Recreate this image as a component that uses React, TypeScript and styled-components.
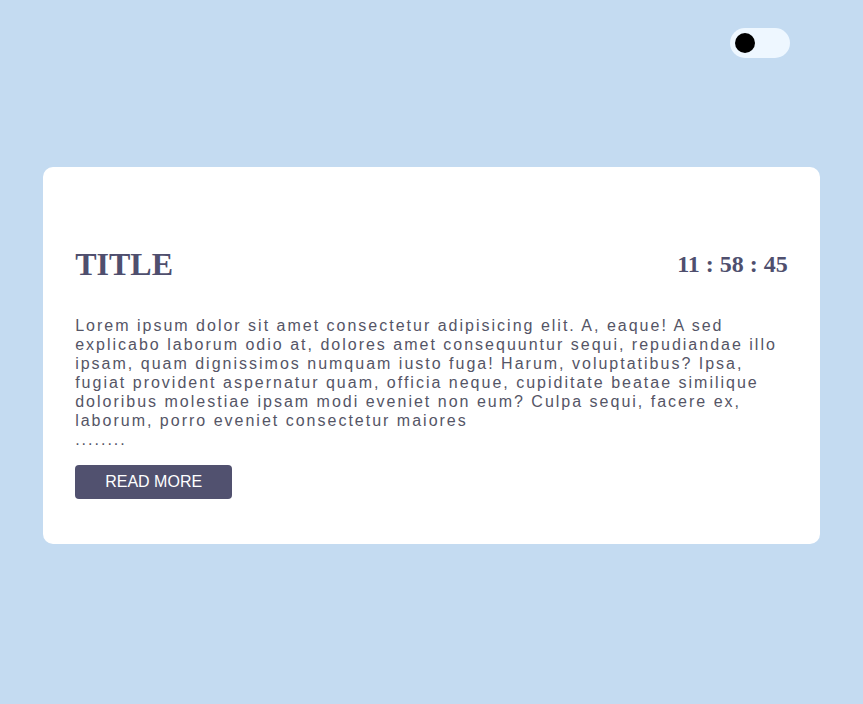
import React from "react";
import styled, { createGlobalStyle } from "styled-components";

const Global = createGlobalStyle`
  html, body { margin: 0; padding: 0; background: #c4dbf1; }
  body { font-family: "Liberation Sans", Arial, sans-serif; }
`;

const Page = styled.div`
  min-height: 704px;
  background: #c4dbf1;
  display: flex;
  flex-direction: column;
  align-items: center;
`;

const TopBar = styled.div`
  width: 100%;
  box-sizing: border-box;
  display: flex;
  justify-content: flex-end;
  padding: 28px 73px 0 0;
`;

const Toggle = styled.div`
  width: 60px;
  height: 30px;
  border-radius: 15px;
  background: #eef7ff;
  display: flex;
  align-items: center;
  padding: 0 5px;
  box-sizing: border-box;
`;

const Knob = styled.div`
  width: 20px;
  height: 20px;
  border-radius: 50%;
  background: #000;
`;

const Card = styled.div`
  width: 90%;
  margin-top: 109px;
  background: #fff;
  border-radius: 10px;
  box-sizing: border-box;
  padding: 79px 32px 45px;
`;

const Header = styled.div`
  display: flex;
  justify-content: space-between;
  align-items: center;
`;

const Title = styled.h1`
  margin: 0;
  font-family: "Liberation Serif", "Times New Roman", serif;
  font-weight: bold;
  font-size: 32px;
  color: #4f4f6e;
  line-height: 37px;
`;

const Clock = styled.div`
  font-family: "Liberation Serif", "Times New Roman", serif;
  font-weight: bold;
  font-size: 24px;
  color: #4f4f6e;
`;

const Text = styled.p`
  margin: 33px 0 16px;
  font-size: 16px;
  line-height: 19px;
  letter-spacing: 2px;
  color: #555566;
`;

const Button = styled.button`
  display: block;
  width: 157px;
  height: 34px;
  border: none;
  border-radius: 4px;
  background: #51516f;
  color: #fff;
  font-family: "Liberation Sans", Arial, sans-serif;
  font-size: 16px;
  cursor: pointer;
`;

export default function App() {
  return (
    <>
      <Global />
      <Page>
        <TopBar>
          <Toggle>
            <Knob />
          </Toggle>
        </TopBar>
        <Card>
          <Header>
            <Title>TITLE</Title>
            <Clock>11 : 58 : 45</Clock>
          </Header>
          <Text>
            Lorem ipsum dolor sit amet consectetur adipisicing elit. A, eaque! A sed
            explicabo laborum odio at, dolores amet consequuntur sequi, repudiandae illo
            ipsam, quam dignissimos numquam iusto fuga! Harum, voluptatibus? Ipsa,
            fugiat provident aspernatur quam, officia neque, cupiditate beatae similique
            doloribus molestiae ipsam modi eveniet non eum? Culpa sequi, facere ex,
            laborum, porro eveniet consectetur maiores
            <br />
            ........
          </Text>
          <Button>READ MORE</Button>
        </Card>
      </Page>
    </>
  );
}
